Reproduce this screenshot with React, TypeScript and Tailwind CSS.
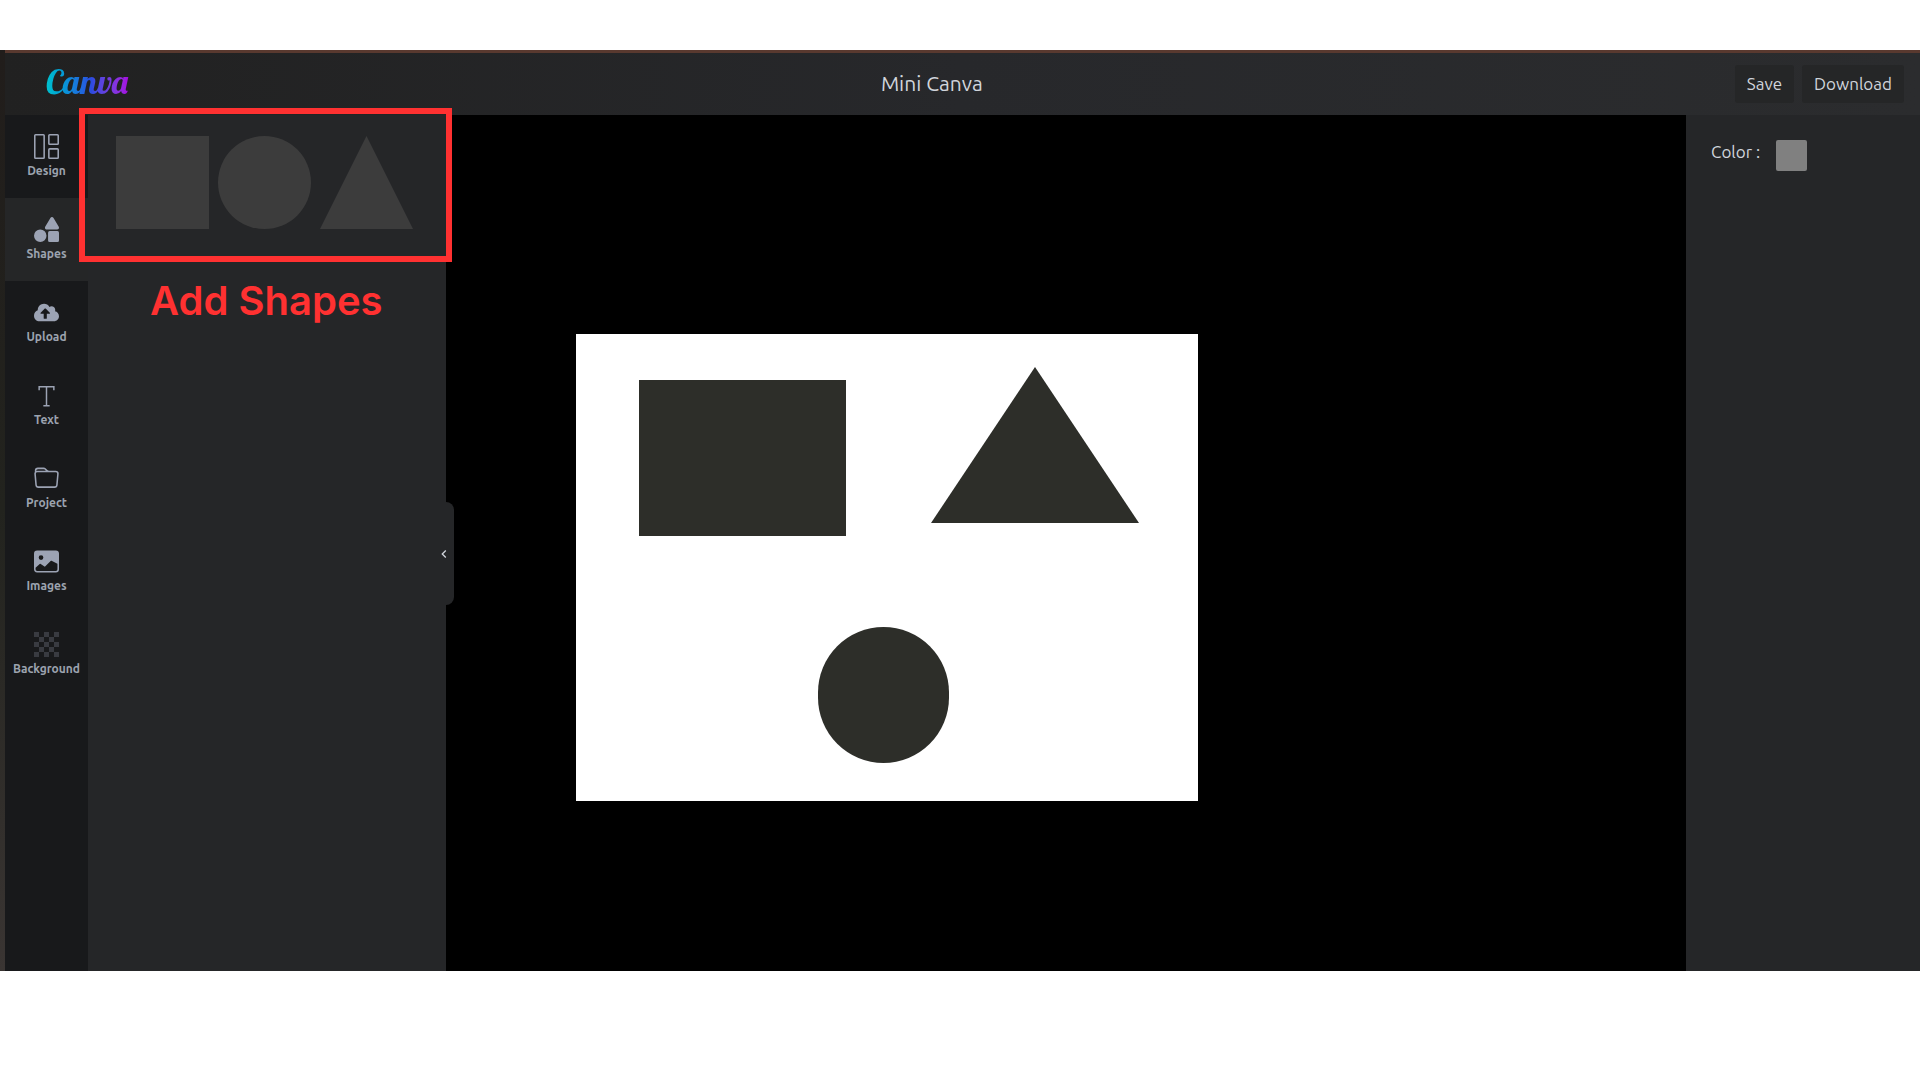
import { useState } from "react";
import type { IconType } from "react-icons";
import { BsFillImageFill, BsFolder, BsGrid1X2 } from "react-icons/bs";
import { FaCloudUploadAlt, FaShapes } from "react-icons/fa";
import { MdKeyboardArrowLeft } from "react-icons/md";
import { RxTransparencyGrid } from "react-icons/rx";
import { TfiText } from "react-icons/tfi";

const tools: { label: string; icon: IconType }[] = [
  { label: "Design", icon: BsGrid1X2 },
  { label: "Shapes", icon: FaShapes },
  { label: "Upload", icon: FaCloudUploadAlt },
  { label: "Text", icon: TfiText },
  { label: "Project", icon: BsFolder },
  { label: "Images", icon: BsFillImageFill },
  { label: "Background", icon: RxTransparencyGrid },
];

const triangle = "[clip-path:polygon(50%_0,100%_100%,0_100%)]";

function Header() {
  return (
    <header className="flex h-[62px] items-center justify-between bg-linear-to-r from-[#212121] via-[#27282b] to-[#2b2c2e] pl-10 pr-4">
      <a
        href="#"
        className="bg-linear-to-r from-[#00c4cc] via-[#2a4be0] via-55% to-[#a800e0] bg-clip-text px-px pb-1 font-['Lobster','Dancing_Script','Liberation_Serif',serif] text-[34px] leading-10 text-transparent"
      >
        Canva
      </a>
      <h1 className="text-[21px] text-gray-300">Mini Canva</h1>
      <div className="flex gap-2 text-[17px] text-gray-300">
        <button className="h-[38px] rounded-[3px] bg-[#252627] px-3">Save</button>
        <button className="h-[38px] rounded-[3px] bg-[#252627] px-3">Download</button>
      </div>
    </header>
  );
}

function ToolBar({ active, onSelect }: { active: string; onSelect: (label: string) => void }) {
  return (
    <nav className="flex w-[83px] shrink-0 flex-col bg-[#18191b]">
      {tools.map(({ label, icon: Icon }) => (
        <button
          key={label}
          onClick={() => onSelect(label)}
          className={`flex h-[83px] flex-col items-center justify-center gap-1 ${
            label === active ? "bg-[#252627]" : ""
          }`}
        >
          <Icon size={25} className="text-[#9ca3b4]" />
          <span className="text-xs font-semibold text-[#9ca3af]">{label}</span>
        </button>
      ))}
    </nav>
  );
}

function ShapesPanel() {
  return (
    <aside className="relative w-[358px] shrink-0 bg-[#252628] px-7 pt-[21px]">
      <div className="flex gap-[9px]">
        <button aria-label="Rectangle" className="size-[93px] bg-[#3c3c3c]" />
        <button aria-label="Circle" className="size-[93px] rounded-full bg-[#3c3c3c]" />
        <button aria-label="Triangle" className={`size-[93px] bg-[#3c3c3c] ${triangle}`} />
      </div>
      <button
        aria-label="Collapse panel"
        className="absolute top-[387px] -right-2 flex h-[103px] w-5 items-center justify-center rounded-r-lg bg-[#252628] text-gray-300"
      >
        <MdKeyboardArrowLeft size={16} />
      </button>
      <div className="pointer-events-none absolute -top-[7px] -right-1.5 -left-[9px] h-[154px] border-6 border-[#ff3131]" />
      <p className="mt-11 pl-[34px] font-['Inter',sans-serif] text-[40px] leading-[56px] font-semibold whitespace-nowrap text-[#ff3131]">
        Add Shapes
      </p>
    </aside>
  );
}

function Artboard() {
  return (
    <main className="min-w-0 flex-1 bg-black pt-[219px] pl-[130px]">
      <div className="relative h-[467px] w-[622px] bg-white">
        <div className="absolute top-[46px] left-[63px] h-[156px] w-[207px] bg-[#2d2e29]" />
        <div className={`absolute top-[33px] left-[355px] h-[156px] w-[208px] bg-[#2d2e29] ${triangle}`} />
        <div className="absolute top-[293px] left-[242px] h-[136px] w-[131px] rounded-full bg-[#2d2e29]" />
      </div>
    </main>
  );
}

function Properties() {
  const [color, setColor] = useState("#808080");
  return (
    <aside className="w-[234px] shrink-0 bg-[#252628] px-[25px] pt-[25px]">
      <div className="flex gap-4">
        <label htmlFor="color" className="text-[17px] leading-6 text-gray-300">
          Color :
        </label>
        <input
          id="color"
          type="color"
          value={color}
          onChange={(e) => setColor(e.target.value)}
          className="size-[31px] appearance-none overflow-hidden rounded-xs [&::-webkit-color-swatch]:border-0 [&::-webkit-color-swatch-wrapper]:p-0"
        />
      </div>
    </aside>
  );
}

export default function App() {
  const [active, setActive] = useState("Shapes");
  return (
    <div className="flex min-h-screen flex-col bg-white pt-[50px] pb-[109px] font-['Ubuntu','Noto_Sans',sans-serif]">
      <div className="flex flex-1">
        <div className="w-[5px] shrink-0 bg-linear-to-b from-[#211d1b] via-[#22231e] to-[#3a3533]" />
        <div className="flex min-w-0 flex-1 flex-col border-t-3 border-[#59392f]">
          <Header />
          <div className="flex flex-1">
            <ToolBar active={active} onSelect={setActive} />
            <ShapesPanel />
            <Artboard />
            <Properties />
          </div>
        </div>
      </div>
    </div>
  );
}
